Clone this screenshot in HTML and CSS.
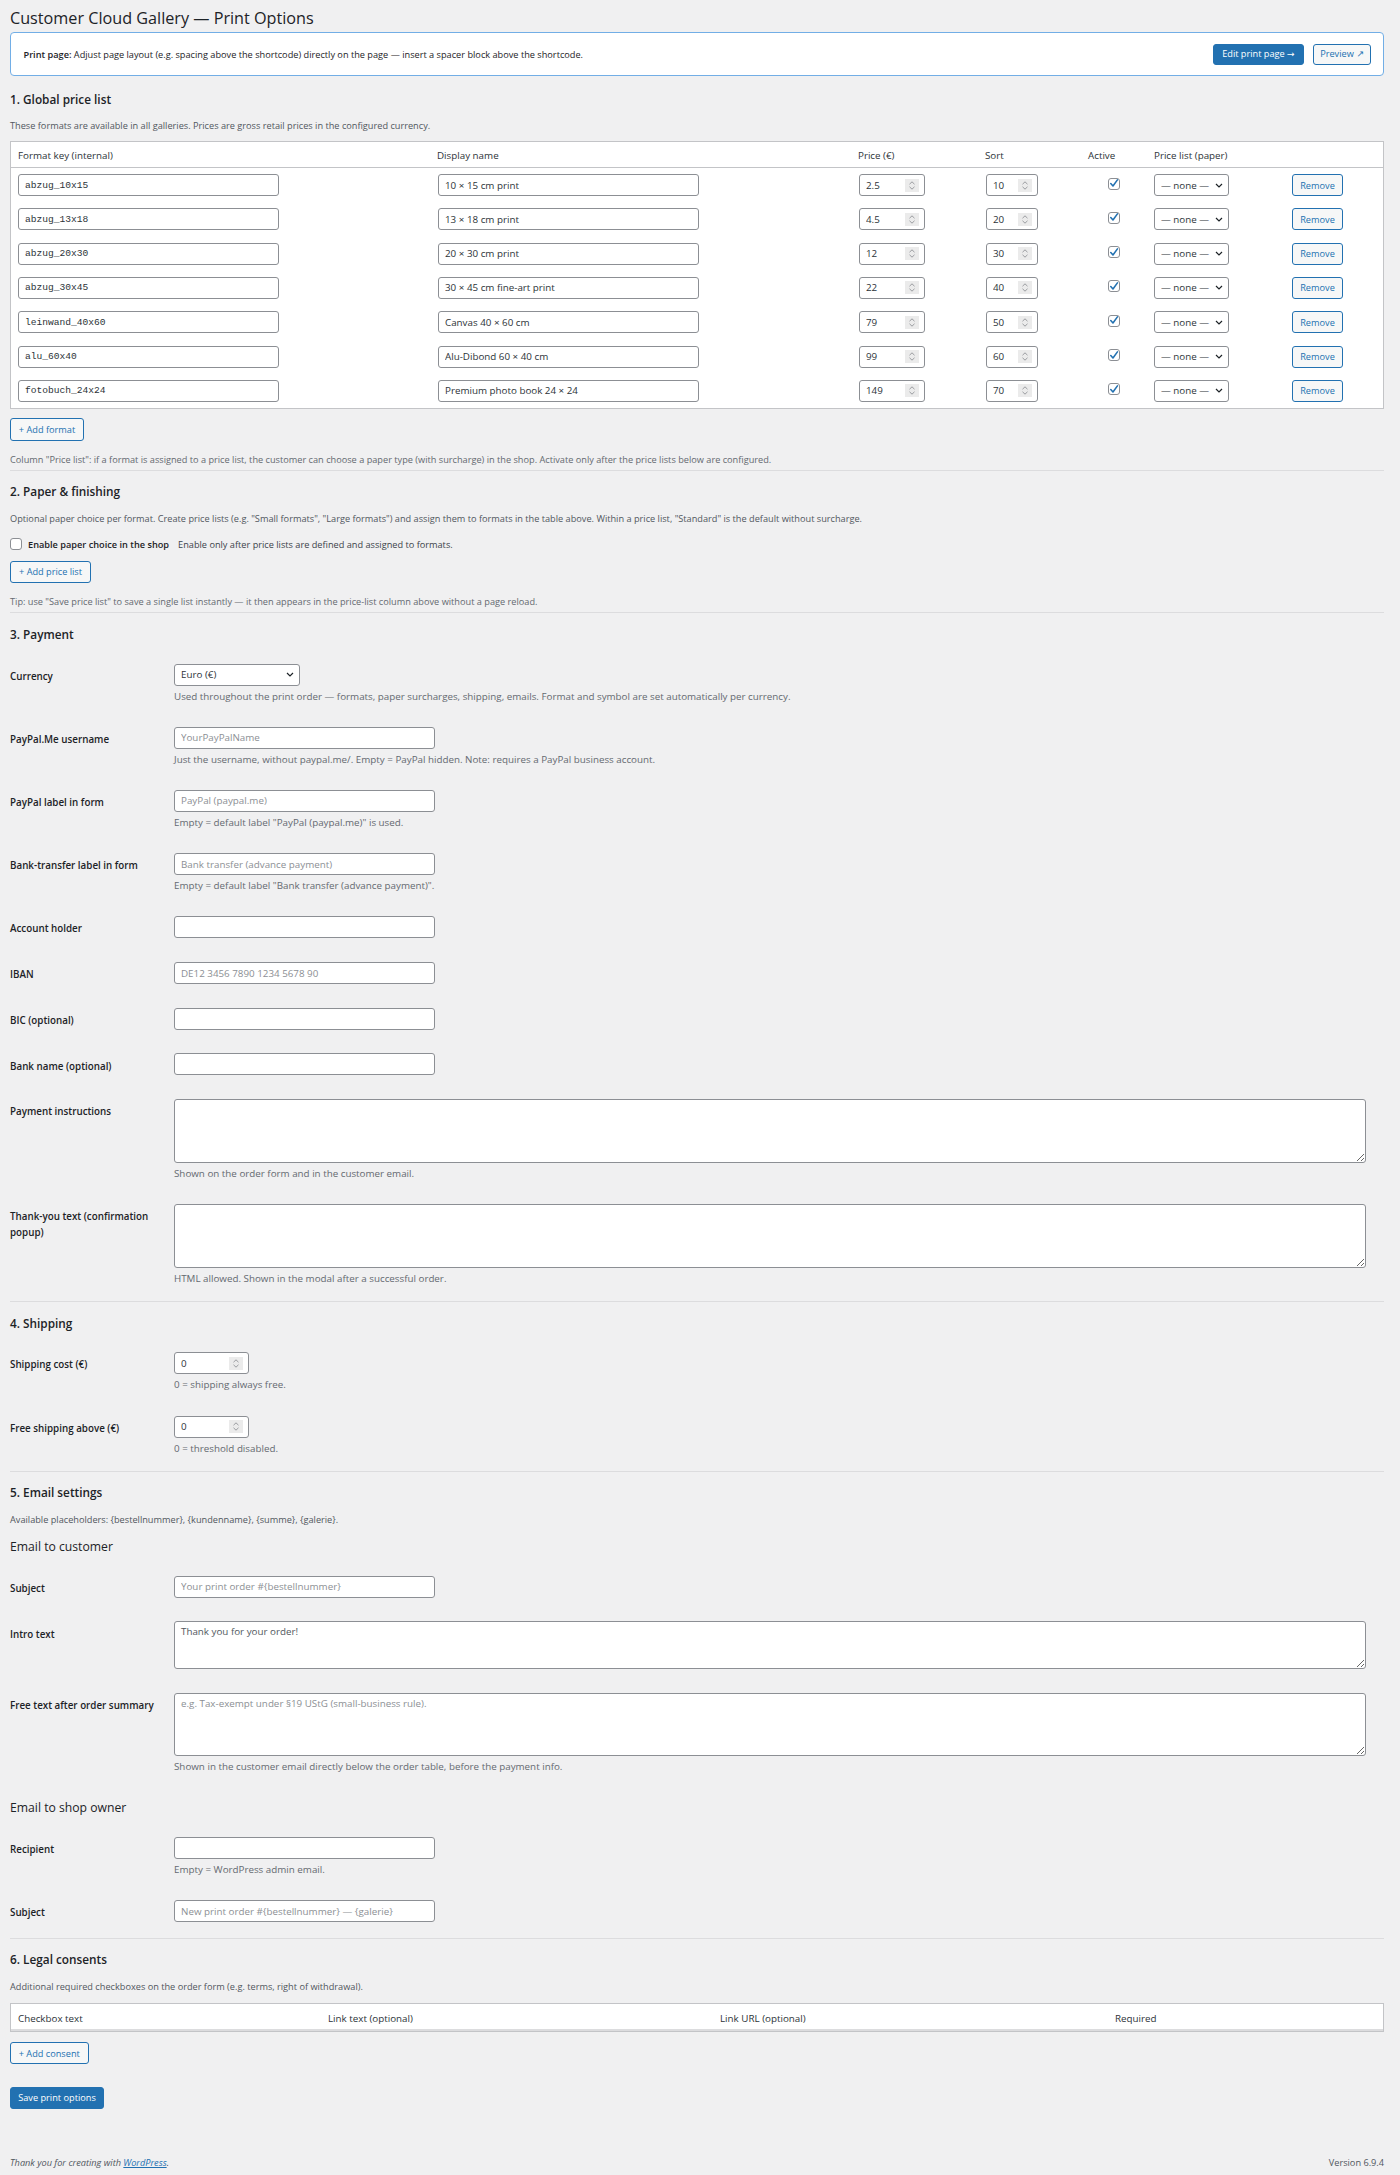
FILE: index.html
```html
<!DOCTYPE html>
<html lang="en">
<head>
<meta charset="utf-8">
<title>Customer Cloud Gallery — Print Options</title>
<link rel="stylesheet" href="styles.css">
</head>
<body>
<div class="wrap">
  <h1 class="page-title">Customer Cloud Gallery — Print Options</h1>

  <div class="notice-card">
    <p><strong>Print page:</strong> Adjust page layout (e.g. spacing above the shortcode) directly on the page — insert a spacer block above the shortcode.</p>
    <div class="notice-actions">
      <a class="btn btn-primary btn-notice btn-edit" href="#">Edit print page →</a>
      <a class="btn btn-notice btn-preview" href="#">Preview ↗</a>
    </div>
  </div>

  <form class="options-form">
    <!-- 1. Global price list -->
    <section class="sec sec-first">
      <h2 class="sec-title">1. Global price list</h2>
      <p class="sec-desc">These formats are available in all galleries. Prices are gross retail prices in the configured currency.</p>
      <table class="grid-table price-table">
        <colgroup>
          <col style="width:419px"><col style="width:421px"><col style="width:127px"><col style="width:103px"><col style="width:66px"><col style="width:138px"><col style="width:98px">
        </colgroup>
        <thead>
          <tr><th>Format key (internal)</th><th>Display name</th><th>Price (€)</th><th>Sort</th><th>Active</th><th>Price list (paper)</th><th></th></tr>
        </thead>
        <tbody>
          <tr>
            <td><div class="cell"><input class="txt mono key-in" type="text" value="abzug_10x15"></div></td>
            <td><div class="cell"><input class="txt name-in" type="text" value="10 × 15 cm print"></div></td>
            <td><div class="cell"><span class="num price-in"><input type="text" value="2.5"><svg class="spin" width="14" height="13" viewBox="0 0 14 13"><rect width="14" height="13" fill="#ebebeb"/><path d="M4.5 5.2 7 2.8 9.5 5.2M4.5 7.8 7 10.2 9.5 7.8" fill="none" stroke="#9a9ca0" stroke-width="1"/></svg></span></div></td>
            <td><div class="cell"><span class="num sort-in"><input type="text" value="10"><svg class="spin" width="14" height="13" viewBox="0 0 14 13"><rect width="14" height="13" fill="#ebebeb"/><path d="M4.5 5.2 7 2.8 9.5 5.2M4.5 7.8 7 10.2 9.5 7.8" fill="none" stroke="#9a9ca0" stroke-width="1"/></svg></span></div></td>
            <td><div class="cell center"><span class="cb checked"><svg width="13" height="13" viewBox="0 0 13 13"><path d="M3 6.6 5.4 9.2 10.2 2.6" fill="none" stroke="#2271b1" stroke-width="1.7" stroke-linecap="round" stroke-linejoin="round"/></svg></span></div></td>
            <td><div class="cell"><span class="select-wrap paper-sel"><select><option>— none —</option></select><svg class="chev" width="8" height="5" viewBox="0 0 8 5"><path d="M1 1 4 4 7 1" fill="none" stroke="#1d2327" stroke-width="1.2"/></svg></span></div></td>
            <td><div class="cell"><button type="button" class="btn btn-remove">Remove</button></div></td>
          </tr>
          <tr>
            <td><div class="cell"><input class="txt mono key-in" type="text" value="abzug_13x18"></div></td>
            <td><div class="cell"><input class="txt name-in" type="text" value="13 × 18 cm print"></div></td>
            <td><div class="cell"><span class="num price-in"><input type="text" value="4.5"><svg class="spin" width="14" height="13" viewBox="0 0 14 13"><rect width="14" height="13" fill="#ebebeb"/><path d="M4.5 5.2 7 2.8 9.5 5.2M4.5 7.8 7 10.2 9.5 7.8" fill="none" stroke="#9a9ca0" stroke-width="1"/></svg></span></div></td>
            <td><div class="cell"><span class="num sort-in"><input type="text" value="20"><svg class="spin" width="14" height="13" viewBox="0 0 14 13"><rect width="14" height="13" fill="#ebebeb"/><path d="M4.5 5.2 7 2.8 9.5 5.2M4.5 7.8 7 10.2 9.5 7.8" fill="none" stroke="#9a9ca0" stroke-width="1"/></svg></span></div></td>
            <td><div class="cell center"><span class="cb checked"><svg width="13" height="13" viewBox="0 0 13 13"><path d="M3 6.6 5.4 9.2 10.2 2.6" fill="none" stroke="#2271b1" stroke-width="1.7" stroke-linecap="round" stroke-linejoin="round"/></svg></span></div></td>
            <td><div class="cell"><span class="select-wrap paper-sel"><select><option>— none —</option></select><svg class="chev" width="8" height="5" viewBox="0 0 8 5"><path d="M1 1 4 4 7 1" fill="none" stroke="#1d2327" stroke-width="1.2"/></svg></span></div></td>
            <td><div class="cell"><button type="button" class="btn btn-remove">Remove</button></div></td>
          </tr>
          <tr>
            <td><div class="cell"><input class="txt mono key-in" type="text" value="abzug_20x30"></div></td>
            <td><div class="cell"><input class="txt name-in" type="text" value="20 × 30 cm print"></div></td>
            <td><div class="cell"><span class="num price-in"><input type="text" value="12"><svg class="spin" width="14" height="13" viewBox="0 0 14 13"><rect width="14" height="13" fill="#ebebeb"/><path d="M4.5 5.2 7 2.8 9.5 5.2M4.5 7.8 7 10.2 9.5 7.8" fill="none" stroke="#9a9ca0" stroke-width="1"/></svg></span></div></td>
            <td><div class="cell"><span class="num sort-in"><input type="text" value="30"><svg class="spin" width="14" height="13" viewBox="0 0 14 13"><rect width="14" height="13" fill="#ebebeb"/><path d="M4.5 5.2 7 2.8 9.5 5.2M4.5 7.8 7 10.2 9.5 7.8" fill="none" stroke="#9a9ca0" stroke-width="1"/></svg></span></div></td>
            <td><div class="cell center"><span class="cb checked"><svg width="13" height="13" viewBox="0 0 13 13"><path d="M3 6.6 5.4 9.2 10.2 2.6" fill="none" stroke="#2271b1" stroke-width="1.7" stroke-linecap="round" stroke-linejoin="round"/></svg></span></div></td>
            <td><div class="cell"><span class="select-wrap paper-sel"><select><option>— none —</option></select><svg class="chev" width="8" height="5" viewBox="0 0 8 5"><path d="M1 1 4 4 7 1" fill="none" stroke="#1d2327" stroke-width="1.2"/></svg></span></div></td>
            <td><div class="cell"><button type="button" class="btn btn-remove">Remove</button></div></td>
          </tr>
          <tr>
            <td><div class="cell"><input class="txt mono key-in" type="text" value="abzug_30x45"></div></td>
            <td><div class="cell"><input class="txt name-in" type="text" value="30 × 45 cm fine-art print"></div></td>
            <td><div class="cell"><span class="num price-in"><input type="text" value="22"><svg class="spin" width="14" height="13" viewBox="0 0 14 13"><rect width="14" height="13" fill="#ebebeb"/><path d="M4.5 5.2 7 2.8 9.5 5.2M4.5 7.8 7 10.2 9.5 7.8" fill="none" stroke="#9a9ca0" stroke-width="1"/></svg></span></div></td>
            <td><div class="cell"><span class="num sort-in"><input type="text" value="40"><svg class="spin" width="14" height="13" viewBox="0 0 14 13"><rect width="14" height="13" fill="#ebebeb"/><path d="M4.5 5.2 7 2.8 9.5 5.2M4.5 7.8 7 10.2 9.5 7.8" fill="none" stroke="#9a9ca0" stroke-width="1"/></svg></span></div></td>
            <td><div class="cell center"><span class="cb checked"><svg width="13" height="13" viewBox="0 0 13 13"><path d="M3 6.6 5.4 9.2 10.2 2.6" fill="none" stroke="#2271b1" stroke-width="1.7" stroke-linecap="round" stroke-linejoin="round"/></svg></span></div></td>
            <td><div class="cell"><span class="select-wrap paper-sel"><select><option>— none —</option></select><svg class="chev" width="8" height="5" viewBox="0 0 8 5"><path d="M1 1 4 4 7 1" fill="none" stroke="#1d2327" stroke-width="1.2"/></svg></span></div></td>
            <td><div class="cell"><button type="button" class="btn btn-remove">Remove</button></div></td>
          </tr>
          <tr>
            <td><div class="cell"><input class="txt mono key-in" type="text" value="leinwand_40x60"></div></td>
            <td><div class="cell"><input class="txt name-in" type="text" value="Canvas 40 × 60 cm"></div></td>
            <td><div class="cell"><span class="num price-in"><input type="text" value="79"><svg class="spin" width="14" height="13" viewBox="0 0 14 13"><rect width="14" height="13" fill="#ebebeb"/><path d="M4.5 5.2 7 2.8 9.5 5.2M4.5 7.8 7 10.2 9.5 7.8" fill="none" stroke="#9a9ca0" stroke-width="1"/></svg></span></div></td>
            <td><div class="cell"><span class="num sort-in"><input type="text" value="50"><svg class="spin" width="14" height="13" viewBox="0 0 14 13"><rect width="14" height="13" fill="#ebebeb"/><path d="M4.5 5.2 7 2.8 9.5 5.2M4.5 7.8 7 10.2 9.5 7.8" fill="none" stroke="#9a9ca0" stroke-width="1"/></svg></span></div></td>
            <td><div class="cell center"><span class="cb checked"><svg width="13" height="13" viewBox="0 0 13 13"><path d="M3 6.6 5.4 9.2 10.2 2.6" fill="none" stroke="#2271b1" stroke-width="1.7" stroke-linecap="round" stroke-linejoin="round"/></svg></span></div></td>
            <td><div class="cell"><span class="select-wrap paper-sel"><select><option>— none —</option></select><svg class="chev" width="8" height="5" viewBox="0 0 8 5"><path d="M1 1 4 4 7 1" fill="none" stroke="#1d2327" stroke-width="1.2"/></svg></span></div></td>
            <td><div class="cell"><button type="button" class="btn btn-remove">Remove</button></div></td>
          </tr>
          <tr>
            <td><div class="cell"><input class="txt mono key-in" type="text" value="alu_60x40"></div></td>
            <td><div class="cell"><input class="txt name-in" type="text" value="Alu-Dibond 60 × 40 cm"></div></td>
            <td><div class="cell"><span class="num price-in"><input type="text" value="99"><svg class="spin" width="14" height="13" viewBox="0 0 14 13"><rect width="14" height="13" fill="#ebebeb"/><path d="M4.5 5.2 7 2.8 9.5 5.2M4.5 7.8 7 10.2 9.5 7.8" fill="none" stroke="#9a9ca0" stroke-width="1"/></svg></span></div></td>
            <td><div class="cell"><span class="num sort-in"><input type="text" value="60"><svg class="spin" width="14" height="13" viewBox="0 0 14 13"><rect width="14" height="13" fill="#ebebeb"/><path d="M4.5 5.2 7 2.8 9.5 5.2M4.5 7.8 7 10.2 9.5 7.8" fill="none" stroke="#9a9ca0" stroke-width="1"/></svg></span></div></td>
            <td><div class="cell center"><span class="cb checked"><svg width="13" height="13" viewBox="0 0 13 13"><path d="M3 6.6 5.4 9.2 10.2 2.6" fill="none" stroke="#2271b1" stroke-width="1.7" stroke-linecap="round" stroke-linejoin="round"/></svg></span></div></td>
            <td><div class="cell"><span class="select-wrap paper-sel"><select><option>— none —</option></select><svg class="chev" width="8" height="5" viewBox="0 0 8 5"><path d="M1 1 4 4 7 1" fill="none" stroke="#1d2327" stroke-width="1.2"/></svg></span></div></td>
            <td><div class="cell"><button type="button" class="btn btn-remove">Remove</button></div></td>
          </tr>
          <tr>
            <td><div class="cell"><input class="txt mono key-in" type="text" value="fotobuch_24x24"></div></td>
            <td><div class="cell"><input class="txt name-in" type="text" value="Premium photo book 24 × 24"></div></td>
            <td><div class="cell"><span class="num price-in"><input type="text" value="149"><svg class="spin" width="14" height="13" viewBox="0 0 14 13"><rect width="14" height="13" fill="#ebebeb"/><path d="M4.5 5.2 7 2.8 9.5 5.2M4.5 7.8 7 10.2 9.5 7.8" fill="none" stroke="#9a9ca0" stroke-width="1"/></svg></span></div></td>
            <td><div class="cell"><span class="num sort-in"><input type="text" value="70"><svg class="spin" width="14" height="13" viewBox="0 0 14 13"><rect width="14" height="13" fill="#ebebeb"/><path d="M4.5 5.2 7 2.8 9.5 5.2M4.5 7.8 7 10.2 9.5 7.8" fill="none" stroke="#9a9ca0" stroke-width="1"/></svg></span></div></td>
            <td><div class="cell center"><span class="cb checked"><svg width="13" height="13" viewBox="0 0 13 13"><path d="M3 6.6 5.4 9.2 10.2 2.6" fill="none" stroke="#2271b1" stroke-width="1.7" stroke-linecap="round" stroke-linejoin="round"/></svg></span></div></td>
            <td><div class="cell"><span class="select-wrap paper-sel"><select><option>— none —</option></select><svg class="chev" width="8" height="5" viewBox="0 0 8 5"><path d="M1 1 4 4 7 1" fill="none" stroke="#1d2327" stroke-width="1.2"/></svg></span></div></td>
            <td><div class="cell"><button type="button" class="btn btn-remove">Remove</button></div></td>
          </tr>
        </tbody>
      </table>
      <button type="button" class="btn btn-add btn-add-format">+ Add format</button>
      <p class="sec-note">Column &quot;Price list&quot;: if a format is assigned to a price list, the customer can choose a paper type (with surcharge) in the shop. Activate only after the price lists below are configured.</p>
    </section>
    <div class="sep sep-1"></div>

    <!-- 2. Paper & finishing -->
    <section class="sec">
      <h2 class="sec-title">2. Paper &amp; finishing</h2>
      <p class="sec-desc">Optional paper choice per format. Create price lists (e.g. &quot;Small formats&quot;, &quot;Large formats&quot;) and assign them to formats in the table above. Within a price list, &quot;Standard&quot; is the default without surcharge.</p>
      <div class="toggle-row">
        <label class="toggle-label"><span class="cb"></span><strong>Enable paper choice in the shop</strong></label>
        <span class="toggle-hint">Enable only after price lists are defined and assigned to formats.</span>
      </div>
      <button type="button" class="btn btn-add btn-add-list">+ Add price list</button>
      <p class="sec-note sec-tip">Tip: use &quot;Save price list&quot; to save a single list instantly — it then appears in the price-list column above without a page reload.</p>
    </section>
    <div class="sep sep-2"></div>

    <!-- 3. Payment -->
    <section class="sec">
      <h2 class="sec-title">3. Payment</h2>
      <div class="form-rows">
        <div class="frow">
          <label class="flabel">Currency</label>
          <div class="fcol">
            <span class="select-wrap currency-sel"><select><option>Euro (€)</option></select><svg class="chev" width="8" height="5" viewBox="0 0 8 5"><path d="M1 1 4 4 7 1" fill="none" stroke="#1d2327" stroke-width="1.2"/></svg></span>
            <p class="fdesc">Used throughout the print order — formats, paper surcharges, shipping, emails. Format and symbol are set automatically per currency.</p>
          </div>
        </div>
        <div class="frow">
          <label class="flabel">PayPal.Me username</label>
          <div class="fcol">
            <input class="txt regular" type="text" placeholder="YourPayPalName">
            <p class="fdesc">Just the username, without paypal.me/. Empty = PayPal hidden. Note: requires a PayPal business account.</p>
          </div>
        </div>
        <div class="frow">
          <label class="flabel">PayPal label in form</label>
          <div class="fcol">
            <input class="txt regular" type="text" placeholder="PayPal (paypal.me)">
            <p class="fdesc">Empty = default label &quot;PayPal (paypal.me)&quot; is used.</p>
          </div>
        </div>
        <div class="frow">
          <label class="flabel">Bank-transfer label in form</label>
          <div class="fcol">
            <input class="txt regular" type="text" placeholder="Bank transfer (advance payment)">
            <p class="fdesc">Empty = default label &quot;Bank transfer (advance payment)&quot;.</p>
          </div>
        </div>
        <div class="frow">
          <label class="flabel">Account holder</label>
          <div class="fcol"><input class="txt regular" type="text"></div>
        </div>
        <div class="frow">
          <label class="flabel">IBAN</label>
          <div class="fcol"><input class="txt regular" type="text" placeholder="DE12 3456 7890 1234 5678 90"></div>
        </div>
        <div class="frow">
          <label class="flabel">BIC (optional)</label>
          <div class="fcol"><input class="txt regular" type="text"></div>
        </div>
        <div class="frow">
          <label class="flabel">Bank name (optional)</label>
          <div class="fcol"><input class="txt regular" type="text"></div>
        </div>
        <div class="frow">
          <label class="flabel">Payment instructions</label>
          <div class="fcol">
            <textarea class="area area-lg"></textarea>
            <p class="fdesc">Shown on the order form and in the customer email.</p>
          </div>
        </div>
        <div class="frow">
          <label class="flabel">Thank-you text (confirmation popup)</label>
          <div class="fcol">
            <textarea class="area area-lg"></textarea>
            <p class="fdesc">HTML allowed. Shown in the modal after a successful order.</p>
          </div>
        </div>
      </div>
    </section>
    <div class="sep"></div>

    <!-- 4. Shipping -->
    <section class="sec">
      <h2 class="sec-title">4. Shipping</h2>
      <div class="form-rows">
        <div class="frow">
          <label class="flabel">Shipping cost (€)</label>
          <div class="fcol">
            <span class="num small-num"><input type="text" value="0"><svg class="spin" width="14" height="13" viewBox="0 0 14 13"><rect width="14" height="13" fill="#ebebeb"/><path d="M4.5 5.2 7 2.8 9.5 5.2M4.5 7.8 7 10.2 9.5 7.8" fill="none" stroke="#9a9ca0" stroke-width="1"/></svg></span>
            <p class="fdesc">0 = shipping always free.</p>
          </div>
        </div>
        <div class="frow">
          <label class="flabel">Free shipping above (€)</label>
          <div class="fcol">
            <span class="num small-num"><input type="text" value="0"><svg class="spin" width="14" height="13" viewBox="0 0 14 13"><rect width="14" height="13" fill="#ebebeb"/><path d="M4.5 5.2 7 2.8 9.5 5.2M4.5 7.8 7 10.2 9.5 7.8" fill="none" stroke="#9a9ca0" stroke-width="1"/></svg></span>
            <p class="fdesc">0 = threshold disabled.</p>
          </div>
        </div>
      </div>
    </section>
    <div class="sep"></div>

    <!-- 5. Email settings -->
    <section class="sec">
      <h2 class="sec-title">5. Email settings</h2>
      <p class="sec-desc">Available placeholders: {bestellnummer}, {kundenname}, {summe}, {galerie}.</p>
      <h3 class="sub-title sub-first">Email to customer</h3>
      <div class="form-rows">
        <div class="frow">
          <label class="flabel">Subject</label>
          <div class="fcol"><input class="txt regular" type="text" placeholder="Your print order #{bestellnummer}"></div>
        </div>
        <div class="frow">
          <label class="flabel">Intro text</label>
          <div class="fcol"><textarea class="area area-sm">Thank you for your order!</textarea></div>
        </div>
        <div class="frow">
          <label class="flabel">Free text after order summary</label>
          <div class="fcol">
            <textarea class="area area-md" placeholder="e.g. Tax-exempt under §19 UStG (small-business rule)."></textarea>
            <p class="fdesc">Shown in the customer email directly below the order table, before the payment info.</p>
          </div>
        </div>
      </div>
      <h3 class="sub-title sub-owner">Email to shop owner</h3>
      <div class="form-rows">
        <div class="frow">
          <label class="flabel">Recipient</label>
          <div class="fcol">
            <input class="txt regular" type="text">
            <p class="fdesc">Empty = WordPress admin email.</p>
          </div>
        </div>
        <div class="frow">
          <label class="flabel">Subject</label>
          <div class="fcol"><input class="txt regular" type="text" placeholder="New print order #{bestellnummer} — {galerie}"></div>
        </div>
      </div>
    </section>
    <div class="sep"></div>

    <!-- 6. Legal consents -->
    <section class="sec">
      <h2 class="sec-title">6. Legal consents</h2>
      <p class="sec-desc">Additional required checkboxes on the order form (e.g. terms, right of withdrawal).</p>
      <table class="grid-table consent-table">
        <colgroup>
          <col style="width:310px"><col style="width:392px"><col style="width:395px"><col style="width:275px">
        </colgroup>
        <thead>
          <tr><th>Checkbox text</th><th>Link text (optional)</th><th>Link URL (optional)</th><th>Required</th></tr>
        </thead>
        <tbody></tbody>
      </table>
      <button type="button" class="btn btn-add btn-add-consent">+ Add consent</button>
      <div class="submit-row">
        <button type="submit" class="btn btn-primary btn-save">Save print options</button>
      </div>
    </section>
  </form>

  <footer class="admin-footer">
    <p class="footer-left">Thank you for creating with <a href="#">WordPress</a>.</p>
    <p class="footer-right">Version 6.9.4</p>
  </footer>
</div>
</body>
</html>
```

FILE: styles.css
```css
* { box-sizing: border-box; }

html, body { margin: 0; padding: 0; }

body {
  background: #f0f0f1;
  color: #3c434a;
  font-family: "Open Sans", "Noto Sans", "DejaVu Sans", sans-serif;
  font-size: 9.2px;
  line-height: 13px;
}

.wrap {
  width: 1374px;
  margin-left: 10px;
}

p { margin: 0; }

/* ---------- page heading ---------- */
.page-title {
  margin: 0;
  padding-top: 7px;
  font-size: 16.2px;
  line-height: 22px;
  font-weight: 400;
  color: #1d2327;
}

/* ---------- info card with actions ---------- */
.notice-card {
  margin-top: 3px;
  display: flex;
  align-items: center;
  justify-content: space-between;
  background: #fff;
  border: 1px solid #72aee6;
  border-radius: 4px;
  padding: 10.5px 12px 10.5px 12.5px;
  color: #1d2327;
}
.notice-card strong { font-weight: 600; }
.notice-actions { display: flex; gap: 9px; }

/* ---------- buttons ---------- */
.btn {
  display: inline-flex;
  align-items: center;
  justify-content: center;
  height: 22px;
  padding: 0 8px;
  border: 1px solid #2271b1;
  border-radius: 3px;
  background: #f6f7f7;
  color: #2271b1;
  font: inherit;
  line-height: 1;
  text-decoration: none;
  white-space: nowrap;
  cursor: pointer;
}
.btn-primary { background: #2271b1; color: #fff; }
.btn-notice { height: 21px; padding: 0; }
.btn-edit { width: 91px; }
.btn-preview { width: 58px; }
.btn-remove { width: 51px; padding: 0; }
.btn-add { display: flex; }
.btn-add-format { margin-top: 9px; height: 23px; width: 74px; }
.btn-add-list { margin-top: 9.7px; width: 81px; }
.btn-add-consent { margin-top: 10.3px; width: 78.5px; height: 22.3px; }
.submit-row { margin-top: 22.4px; }
.btn-save { width: 94px; }

/* ---------- sections ---------- */
.sec-title {
  margin: 12.5px 0 0;
  font-size: 11.8px;
  line-height: 17px;
  font-weight: 600;
  color: #1d2327;
}
.sec-first .sec-title { margin-top: 14.5px; }
.sec-desc { margin-top: 11.5px; color: #50575e; }
.sec-note { margin-top: 12px; color: #646970; }
.sec-tip { margin-top: 12px; }

.sep { border-top: 1px solid #dcdcde; margin-top: 4px; }
.sep-2 { margin-top: 4.6px; }

.sub-title {
  margin: 9px 0 0;
  font-size: 12.2px;
  line-height: 17px;
  font-weight: 500;
  color: #1d2327;
}
.sub-first { margin-top: 12px; }
.sub-owner { margin-top: 14px; }

/* ---------- data tables ---------- */
.grid-table {
  table-layout: fixed;
  width: 1374px;
  border-collapse: separate;
  border-spacing: 0;
  background: #fff;
  border: 1px solid #c3c4c7;
  margin-top: 9px;
}
.grid-table th {
  text-align: left;
  font-weight: 400;
  font-size: 9.8px;
  color: #2c3338;
  padding: 7px 7px 5px;
  border-bottom: 1px solid #c3c4c7;
  line-height: 13px;
}
.price-table td { padding: 6.15px 7px; }
.consent-table { margin-top: 10.5px; }
.consent-table th { padding: 7.5px 7px 3.9px; border-bottom: 2px solid #dcdcde; }

.cell { display: flex; align-items: center; height: 22px; }
.cell.center { justify-content: center; }

/* ---------- form controls ---------- */
.txt {
  display: block;
  height: 22px;
  padding: 0 6px;
  border: 1px solid #8c8f94;
  border-radius: 3px;
  background: #fff;
  color: #2c3338;
  font: inherit;
  font-size: 9.8px;
  line-height: 20px;
  outline: none;
}
.txt::placeholder { color: #8c8f94; }
.mono { font-family: "Liberation Mono", "DejaVu Sans Mono", monospace; font-size: 9.6px; }
.key-in { width: 261px; }
.name-in { width: 261px; margin-left: 1px; }
.regular { width: 261px; }

.num {
  display: inline-flex;
  align-items: center;
  height: 22px;
  padding: 0 5px 0 6px;
  border: 1px solid #8c8f94;
  border-radius: 3px;
  background: #fff;
}
.num input {
  flex: 1;
  min-width: 0;
  height: 100%;
  border: 0;
  padding: 0;
  background: transparent;
  color: #2c3338;
  font: inherit;
  font-size: 9.8px;
  outline: none;
}
.spin { flex: none; display: block; }
.price-in { width: 66px; margin-left: 1px; }
.sort-in { width: 52px; margin-left: 1px; }
.small-num { width: 75px; }

.cb {
  display: inline-flex;
  align-items: center;
  justify-content: center;
  width: 12px;
  height: 12px;
  border: 1px solid #8c8f94;
  border-radius: 3px;
  background: #fff;
  flex: none;
}
.cb svg { display: block; margin: -1px; }
.price-table .cb { margin-top: -3px; }

.select-wrap { position: relative; display: inline-block; }
.select-wrap select {
  display: block;
  appearance: none;
  -webkit-appearance: none;
  height: 22px;
  padding: 0 16px 0 6px;
  border: 1px solid #8c8f94;
  border-radius: 3px;
  background: #fff;
  color: #2c3338;
  font: inherit;
  font-size: 9.8px;
  outline: none;
}
.select-wrap .chev {
  position: absolute;
  right: 6px;
  top: 50%;
  margin-top: -2.5px;
  pointer-events: none;
}
.paper-sel select { width: 75px; }
.currency-sel select { width: 126px; }

/* ---------- toggle row ---------- */
.toggle-row {
  margin-top: 13px;
  display: flex;
  align-items: center;
  gap: 9px;
  height: 13px;
}
.toggle-label { display: inline-flex; align-items: center; gap: 6px; color: #1d2327; }
.toggle-label strong { font-weight: 600; }
.toggle-hint { color: #3c434a; }

/* ---------- settings rows ---------- */
.form-rows { margin-top: 9px; margin-bottom: 4px; font-size: 9.8px; }
.frow {
  display: grid;
  grid-template-columns: 155px 1192px;
  column-gap: 9px;
  padding: 11.85px 0;
}
.flabel {
  padding-top: 5.15px;
  line-height: 15.7px;
  font-weight: 600;
  color: #1d2327;
}
.fdesc { margin-top: 5px; line-height: 12.5px; color: #646970; }

.area {
  display: block;
  width: 1192px;
  padding: 3px 6px;
  border: 1px solid #8c8f94;
  border-radius: 3px;
  background: #fff;
  color: #50575e;
  font: inherit;
  font-size: 9.8px;
  line-height: 13px;
  outline: none;
}
.area::placeholder { color: #8c8f94; }
.area-lg { height: 63.7px; }
.area-md { height: 63px; }
.area-sm { height: 47.6px; }

/* ---------- footer ---------- */
.admin-footer {
  margin-top: 46.8px;
  display: flex;
  justify-content: space-between;
  color: #50575e;
}
.footer-left { font-style: italic; }
.footer-left a { color: #2271b1; text-decoration: underline; }
```
